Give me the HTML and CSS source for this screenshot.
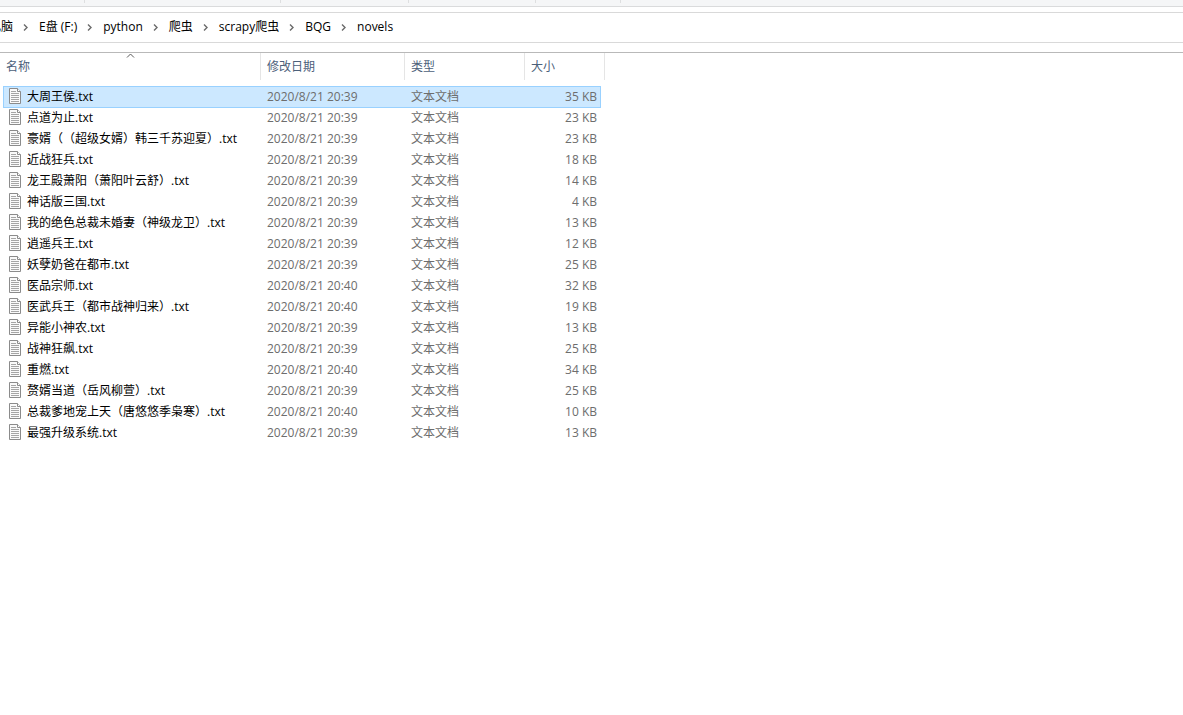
FILE: index.html
```
<!DOCTYPE html>
<html lang="zh-CN">
<head>
<meta charset="utf-8">
<title>novels</title>
<link rel="stylesheet" href="styles.css">
</head>
<body>
<div class="ribbon"></div>
<nav class="address" aria-label="路径"><ol class="crumbs" id="crumbs"></ol></nav>
<main class="pane">
<table class="files">
<thead>
<tr>
<th scope="col" aria-sort="ascending"><button type="button">名称</button><svg class="sort" width="9" height="5" viewBox="0 0 9 5"><path d="M1 4.5 4.5 1 8 4.5" fill="none" stroke="#5a5a5a"/></svg></th>
<th scope="col"><button type="button">修改日期</button></th>
<th scope="col"><button type="button">类型</button></th>
<th scope="col"><button type="button">大小</button></th>
</tr>
</thead>
<tbody id="rows"></tbody>
</table>
</main>
<script src="app.js"></script>
</body>
</html>
```
FILE: styles.css
```
* {
  box-sizing: border-box;
}

body {
  margin: 0;
  background: #fff;
  color: #000;
  font: 12px/20px "Open Sans", "Noto Sans CJK SC", sans-serif;
  text-spacing-trim: space-all;
  overflow-x: hidden;
}

.ribbon {
  display: flex;
  height: 7px;
  background: #f5f6f7;
  border-bottom: 1px solid #dadbdc;
}

.group {
  height: 3px;
  border-right: 1px solid #dedfe0;
}

.address {
  margin-top: 5px;
  height: 31px;
  border: solid #d9d9d9;
  border-width: 1px 0;
  overflow: hidden;
}

.crumbs {
  display: flex;
  align-items: center;
  height: 28px;
  margin: 0 0 0 -23px;
  padding: 0;
  list-style: none;
  white-space: nowrap;
}

.crumbs li {
  display: flex;
  align-items: center;
}

.crumbs a {
  color: #000;
  text-decoration: none;
}

.chevron {
  margin: 0 11px 0 10px;
}

.pane {
  margin-top: 9px;
  border-top: 1px solid #b9b9b9;
}

.files,
.files thead,
.files tbody {
  display: block;
}

.files tr {
  display: grid;
  grid-template-columns: 258px 144px 120px 76px;
}

.files thead tr {
  grid-template-columns: 261px 144px 120px 80px;
  height: 27px;
  margin-bottom: 6px;
}

.files th {
  position: relative;
  padding: 0 6px;
  border-right: 1px solid #e5e5e5;
  text-align: left;
}

.files th button {
  width: 100%;
  height: 27px;
  padding: 0;
  border: 0;
  background: none;
  color: #4c607a;
  font: inherit;
  font-weight: 400;
  text-align: left;
}

.sort {
  position: absolute;
  top: 0;
  left: calc(50% - 4px);
}

.files tbody tr {
  width: 598px;
  height: 21px;
  margin-left: 3px;
}

.files tbody tr.selected {
  height: 22px;
  margin-bottom: -1px;
  background: #cce8ff;
  box-shadow: inset 0 0 0 1px #99d1ff;
}

.files td {
  height: 21px;
  padding: 0 6px;
  color: #6d6d6d;
  line-height: 22px;
  white-space: nowrap;
}

.files td.name {
  display: flex;
  align-items: flex-start;
  gap: 6px;
  color: #000;
}

.files td.size {
  padding: 0 4px;
  text-align: right;
}

.page {
  margin-top: 2px;
}
```
FILE: app.js
```
const groups = [85, 196, 128, 127, 85];
const crumbs = ["此电脑", "E盘 (F:)", "python", "爬虫", "scrapy爬虫", "BQG", "novels"];
const files = [
  ["大周王侯", "39", 35],
  ["点道为止", "39", 23],
  ["豪婿（（超级女婿）韩三千苏迎夏）", "39", 23],
  ["近战狂兵", "39", 18],
  ["龙王殿萧阳（萧阳叶云舒）", "39", 14],
  ["神话版三国", "39", 4],
  ["我的绝色总裁未婚妻（神级龙卫）", "39", 13],
  ["逍遥兵王", "39", 12],
  ["妖孽奶爸在都市", "39", 25],
  ["医品宗师", "40", 32],
  ["医武兵王（都市战神归来）", "40", 19],
  ["异能小神农", "39", 13],
  ["战神狂飙", "39", 25],
  ["重燃", "40", 34],
  ["赘婿当道（岳风柳萱）", "39", 25],
  ["总裁爹地宠上天（唐悠悠季枭寒）", "40", 10],
  ["最强升级系统", "39", 13]
];

const chevron = '<svg class="chevron" width="5" height="7" viewBox="0 0 5 7"><path d="M1 .5 4 3.5 1 6.5" fill="none" stroke="#6a6a6a" stroke-width="1.4"/></svg>';
const page = '<svg class="page" width="12" height="16" viewBox="0 0 12 16">' +
  '<path d="M.5.5H8.5L11.5 3.5V15.5H.5Z" fill="#fafafa" stroke="#8b8b8b"/>' +
  '<path d="M8.5.5V3.5H11.5" fill="#fff" stroke="#8b8b8b"/>' +
  '<path d="M2 3.5H7M2 5.5H10M2 7.5H10M2 9.5H10M2 11.5H10M2 13.5H10" stroke="#a5a5a5"/></svg>';

document.querySelector(".ribbon").innerHTML =
  groups.map(w => `<div class="group" style="width:${w}px"></div>`).join("");
document.getElementById("crumbs").innerHTML =
  crumbs.map((c, i) => `<li>${i ? chevron : ""}<a href="#">${c}</a></li>`).join("");
document.getElementById("rows").innerHTML =
  files.map(([name, minute, size], i) =>
    `<tr${i ? "" : ' class="selected"'}><td class="name">${page}<span>${name}.txt</span></td>` +
    `<td>2020/8/21 20:${minute}</td><td>文本文档</td><td class="size">${size} KB</td></tr>`).join("");
```
